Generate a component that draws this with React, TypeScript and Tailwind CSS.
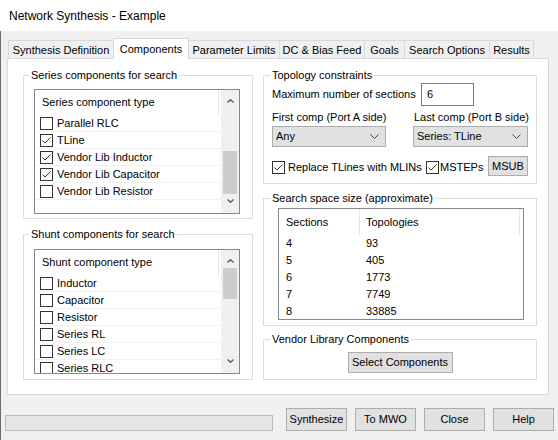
import React from "react";

const Check = ({ checked }: { checked: boolean }) => (
  <span className="flex h-[13px] w-[13px] shrink-0 items-center justify-center border border-[#333333] bg-white">
    {checked && (
      <svg width="11" height="11" viewBox="0 0 11 11">
        <polyline points="1.5,5.5 4,8 9.5,2.5" fill="none" stroke="#333333" strokeWidth="1" />
      </svg>
    )}
  </span>
);

const ArrowUp = () => (
  <svg width="7" height="4" viewBox="0 0 7 4">
    <polyline points="0.5,3.5 3.5,0.7 6.5,3.5" fill="none" stroke="#606060" strokeWidth="1.4" />
  </svg>
);
const ArrowDown = () => (
  <svg width="7" height="4" viewBox="0 0 7 4">
    <polyline points="0.5,0.5 3.5,3.3 6.5,0.5" fill="none" stroke="#606060" strokeWidth="1.4" />
  </svg>
);
const Chevron = () => (
  <svg width="9" height="5" viewBox="0 0 9 5">
    <polyline points="0.5,0.5 4.5,4.5 8.5,0.5" fill="none" stroke="#444444" strokeWidth="1" />
  </svg>
);

const ScrollBar = ({ thumbTop, thumbH }: { thumbTop: number; thumbH: number }) => (
  <div className="flex w-[18px] shrink-0 flex-col bg-[#f0f0f0]">
    <div className="flex h-[17px] items-end justify-center pb-[4px]">
      <ArrowUp />
    </div>
    <div className="flex-1 px-[2px]">
      <div className="bg-[#cdcdcd]" style={{ marginTop: thumbTop, height: thumbH }} />
    </div>
    <div className="flex h-[17px] items-start justify-center pt-[3px]">
      <ArrowDown />
    </div>
  </div>
);

type Item = { label: string; checked: boolean };

const CheckList = ({
  header,
  items,
  thumbTop,
  thumbH,
}: {
  header: string;
  items: Item[];
  thumbTop: number;
  thumbH: number;
}) => (
  <div className="flex h-[125px] w-[206px] overflow-hidden border border-[#828790] bg-white">
    <div className="flex w-[186px] flex-col overflow-hidden">
      <div className="flex h-[25px] shrink-0">
        <div className="flex w-[184px] items-center border-r border-[#e5e5e5] pl-[7px]">{header}</div>
      </div>
      {items.map((it) => (
        <div key={it.label} className="flex h-[17px] shrink-0 items-center border-b border-[#f0f0f0] pl-[5px]">
          <Check checked={it.checked} />
          <span className="ml-[4px]">{it.label}</span>
        </div>
      ))}
    </div>
    <ScrollBar thumbTop={thumbTop} thumbH={thumbH} />
  </div>
);

const Legend = ({ children, left }: { children: React.ReactNode; left?: boolean }) => (
  <legend className={`${left ? "ml-[5px]" : "ml-[6px]"} px-[2px] leading-[15px]`}>{children}</legend>
);

const Button = ({ children, className = "" }: { children: React.ReactNode; className?: string }) => (
  <div className={`flex items-center justify-center border border-[#adadad] bg-[#e1e1e1] ${className}`}>
    {children}
  </div>
);

const Combo = ({ value, className = "" }: { value: string; className?: string }) => (
  <div
    className={`flex h-[21px] items-center justify-between border border-[#adadad] bg-[#e1e1e1] pl-[3px] pr-[6px] ${className}`}
  >
    <span>{value}</span>
    <Chevron />
  </div>
);

const tabs = [
  { label: "Synthesis Definition", w: "w-[106px]" },
  { label: "Components", w: "w-[76px]", active: true },
  { label: "Parameter Limits", w: "w-[92px]" },
  { label: "DC & Bias Feed", w: "w-[86px]" },
  { label: "Goals", w: "w-[41px]" },
  { label: "Search Options", w: "w-[86px]" },
  { label: "Results", w: "w-[45px]" },
];

const seriesItems: Item[] = [
  { label: "Parallel RLC", checked: false },
  { label: "TLine", checked: true },
  { label: "Vendor Lib Inductor", checked: true },
  { label: "Vendor Lib Capacitor", checked: true },
  { label: "Vendor Lib Resistor", checked: false },
];

const shuntItems: Item[] = [
  { label: "Inductor", checked: false },
  { label: "Capacitor", checked: false },
  { label: "Resistor", checked: false },
  { label: "Series RL", checked: false },
  { label: "Series LC", checked: false },
  { label: "Series RLC", checked: false },
];

const space = [
  ["4", "93"],
  ["5", "405"],
  ["6", "1773"],
  ["7", "7749"],
  ["8", "33885"],
];

export default function App() {
  return (
    <div className="flex h-[440px] w-[558px] flex-col overflow-hidden whitespace-nowrap bg-white font-['Liberation_Sans',Arial,sans-serif] text-[11px] leading-[15px] text-black">
      <div className="flex h-[31px] shrink-0 items-center bg-white pl-[9px] pt-[1px] text-[12px]">
        Network Synthesis - Example
      </div>
      <div className="flex flex-1 flex-col border-l border-[#6b6b6b] bg-[#f0f0f0]">
        <div className="flex items-end pl-[7px] pt-[7px]">
          {tabs.map((t, i) =>
            t.active ? (
              <div
                key={t.label}
                className={`relative z-10 -mb-px -ml-px flex h-[21px] ${t.w} items-center justify-center border-x border-t border-[#d9d9d9] bg-white`}
              >
                {t.label}
              </div>
            ) : (
              <div
                key={t.label}
                className={`${i > 0 ? "-ml-px" : ""} flex h-[18px] ${t.w} items-center justify-center border-x border-t border-[#d9d9d9] bg-[#f0f0f0] pt-[2px]`}
              >
                {t.label}
              </div>
            )
          )}
        </div>

        <div className="ml-[6px] flex h-[337px] w-[542px] shrink-0 gap-[10px] border border-[#d9d9d9] bg-white pl-[15px] pt-[9px]">
          <div className="flex w-[230px] flex-col gap-[8px]">
            <fieldset className="h-[151px] w-[230px] border border-[#dcdcdc]">
              <Legend left>Series components for search</Legend>
              <div className="pl-[10px] pt-[6px]">
                <CheckList header="Series component type" items={seriesItems} thumbTop={44} thumbH={43} />
              </div>
            </fieldset>
            <fieldset className="h-[153px] w-[230px] border border-[#dcdcdc]">
              <Legend left>Shunt components for search</Legend>
              <div className="pl-[10px] pt-[7px]">
                <CheckList header="Shunt component type" items={shuntItems} thumbTop={1} thumbH={31} />
              </div>
            </fieldset>
          </div>

          <div className="flex w-[274px] flex-col">
            <fieldset className="h-[116px] w-[274px] border border-[#dcdcdc]">
              <Legend>Topology constraints</Legend>
              <div className="flex flex-col pl-[8px]">
                <div className="flex h-[23px] items-center">
                  <span className="w-[149px]">Maximum number of sections</span>
                  <div className="flex h-[23px] w-[53px] items-center border border-[#7a7a7a] bg-white pl-[5px]">
                    6
                  </div>
                </div>
                <div className="mt-[4px] flex">
                  <span className="w-[141px]">First comp (Port A side)</span>
                  <span className="ml-[1px]">Last comp (Port B side)</span>
                </div>
                <div className="mt-[1px] flex gap-[27px]">
                  <Combo value="Any" className="w-[114px]" />
                  <Combo value="Series: TLine" className="w-[115px]" />
                </div>
                <div className="mt-[9px] flex h-[20px] items-center">
                  <div className="mt-[3px] flex w-[154px] items-center">
                    <Check checked />
                    <span className="ml-[3px]">Replace TLines with MLINs</span>
                  </div>
                  <div className="mt-[3px] flex items-center">
                    <Check checked />
                    <span className="ml-[1px]">MSTEPs</span>
                  </div>
                  <Button className="ml-auto mr-[8px] h-[20px] w-[40px]">MSUB</Button>
                </div>
              </div>
            </fieldset>

            <fieldset className="mt-[7px] h-[135px] w-[274px] border border-[#dcdcdc]">
              <Legend>Search space size (approximate)</Legend>
              <div className="pl-[14px] pt-[2px]">
                <div className="h-[112px] w-[246px] overflow-hidden border border-[#828790] bg-white">
                  <div className="flex h-[26px]">
                    <div className="flex w-[81px] items-center border-r border-[#e5e5e5] pl-[7px]">Sections</div>
                    <div className="flex w-[160px] items-center border-r border-[#e5e5e5] pl-[6px]">Topologies</div>
                  </div>
                  {space.map(([s, t]) => (
                    <div key={s} className="flex h-[17px] items-center">
                      <div className="w-[81px] pl-[7px]">{s}</div>
                      <div className="pl-[6px]">{t}</div>
                    </div>
                  ))}
                </div>
              </div>
            </fieldset>

            <fieldset className="mt-[6px] h-[48px] w-[274px] border border-[#dcdcdc]">
              <Legend>Vendor Library Components</Legend>
              <div className="flex justify-center pt-[5px]">
                <Button className="h-[21px] w-[105px]">Select Components</Button>
              </div>
            </fieldset>
          </div>
        </div>

        <div className="flex items-start">
          <div className="ml-[4px] mt-[20px] h-[16px] w-[268px] border border-[#bcbcbc] bg-[#e6e6e6]" />
          <div className="ml-[13px] mt-[13px] flex gap-[8px]">
            <Button className="h-[23px] w-[61px]">Synthesize</Button>
            <Button className="h-[23px] w-[61px]">To MWO</Button>
            <Button className="h-[23px] w-[61px]">Close</Button>
            <Button className="h-[23px] w-[61px]">Help</Button>
          </div>
        </div>
      </div>
    </div>
  );
}
